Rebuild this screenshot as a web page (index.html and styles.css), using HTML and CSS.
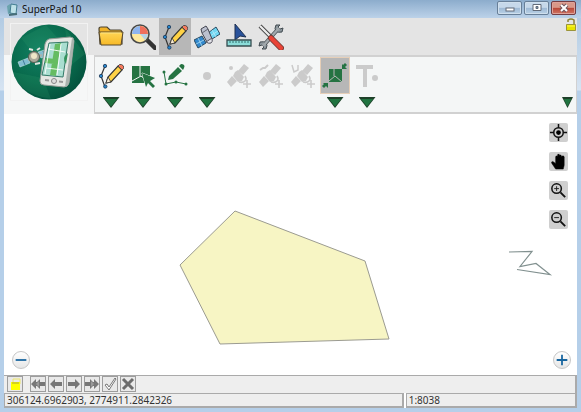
FILE: index.html
```html
<!DOCTYPE html>
<html lang="en">
<head>
<meta charset="utf-8">
<title>SuperPad 10</title>
<link rel="stylesheet" href="styles.css">
</head>
<body>
<svg class="defs" aria-hidden="true">
  <defs>
    <radialGradient id="disc" cx=".4" cy=".35" r=".7"><stop offset="0" stop-color="#128063"/><stop offset=".6" stop-color="#086a4c"/><stop offset="1" stop-color="#04503c"/></radialGradient>
    <linearGradient id="gold" x2="0" y2="1"><stop offset="0" stop-color="#ffd655"/><stop offset="1" stop-color="#f7b928"/></linearGradient>
    <symbol id="draw" viewBox="0 0 26 26">
      <path d="M7 3 3 13l4 11" fill="none" stroke="#333" stroke-width="1.2"/>
      <g fill="#2586cc" stroke="#1d3553" stroke-width=".8"><circle cx="7" cy="3" r="1.7"/><circle cx="3" cy="13" r="1.7"/><circle cx="7.300" cy="23.500" r="1.700"/></g>
      <path d="m8 20 2-6L20 3l4 4-11 12z" fill="#ffd245" stroke="#343434" stroke-width="1.200"/>
      <path d="m20 3 1.500-1.500q2-.5 3.500 1t.5 3L24 7z" fill="#f4795c" stroke="#444" stroke-width=".9"/>
      <path d="m10 14 3 5-5 1z" fill="#f8ead2" stroke="#333" stroke-width=".8"/>
    </symbol>
    <symbol id="gps" viewBox="0 0 26 26">
      <g fill="#cbcbcb"><path d="m18 1 5 4-6 7-5-4zM6 13l5 5-6 6-4-5z"/><path d="m9 9 3-2 6 7-2 4-4 1-5-6z"/></g>
      <path d="M13 19q4 1 6-1t0-5M21 17v8M17 21h8" fill="none" stroke="#cbcbcb" stroke-width="1.600"/>
    </symbol>
  </defs>
</svg>
<div class="window">
  <header class="titlebar">
    <svg class="app-icon" viewBox="0 0 13 13" aria-hidden="true"><path d="M1 3 4 1l2 9-4 1z" fill="#6ba3ad"/><path d="m5 1 6 1-1 9-6-1z" fill="#bee1e8" stroke="#427d91"/><path d="m3 12 8-1" stroke="#476d77" stroke-width="2"/></svg>
    <h1>SuperPad 10</h1>
    <div class="window-buttons">
      <button aria-label="Minimize"><svg viewBox="0 0 22 12"><rect x="7" y="6" width="8" height="3" fill="#fff" stroke="#626b79"/></svg></button>
      <button aria-label="Maximize"><svg viewBox="0 0 22 12"><path d="M7 2.500h8v6H7z" fill="#fff" stroke="#626b79"/><path d="M10 4.500h2v2h-2z" fill="#7796b6" stroke="#626b79"/></svg></button>
      <button class="close" aria-label="Close"><svg viewBox="0 0 22 12"><path d="m8 3 6 6m0-6L8 9" stroke="#70545b" stroke-width="4"/><path d="m8 3 6 6m0-6L8 9" stroke="#fff" stroke-width="2"/></svg></button>
    </div>
  </header>
  <main class="client">
    <section class="ribbon">
      <button class="logo" aria-label="SuperPad menu">
        <svg viewBox="0 0 76 76"><circle cx="38" cy="38" r="37.500" fill="url(#disc)"/>
          <path d="M10 14 35 1l16 18L32 42zM54 4l20 26-15 12zM2 48l30 6 8 21Q8 70 2 48z" fill="#31a06e" opacity=".2"/>
          <path d="m7 38 10-4 2 5-10 4zM27 28l10-3 1 6-8 3z" fill="#82bdd0" stroke="#c5e0e4" stroke-width=".6"/>
          <path d="m12 36 2 5m18-14 2 6" stroke="#417b98" stroke-width="1"/>
          <path d="m17 36 14-5" stroke="#abb3ad" stroke-width="2"/><circle cx="23" cy="33" r="5.500" fill="#aaa99b" stroke="#575e53"/><circle cx="23" cy="32" r="3" fill="#eee6c8"/><path d="m18 25 4 1m2 14 5-1m-3-13 3-2" stroke="#dfe6df" stroke-width="2"/>
          <path d="m38 15 21-2q4 0 4 4l-5 42q-1 4-5 4l-20-2q-4 0-4-4l5-37q1-4 4-5z" fill="#e5e7e3" stroke="#919b95"/>
          <path d="m61 14 2 3-5 42q-1 3-4 4z" fill="#aab3ae"/>
          <path d="m38 19 19-1-5 35-21-2z" fill="#a9ded0" stroke="#357a69"/>
          <path d="m44 20 6-1-5 33-6-1zM35 34l9 1-1 5-9-1z" fill="#65bc61"/><path d="m37 25 17 3M35 44l17 2M50 20l-4 31M39 20l-5 30" stroke="#fff" stroke-width=".9"/><path d="M57 29q-7 5-2 11z" fill="#33925c"/>
          <circle cx="43" cy="57" r="2.500" fill="#ddd" stroke="#888"/><path d="m34 56 4 .5m10 1 4 .5" stroke="#999" stroke-width="2"/>
        </svg>
      </button>
      <div class="tools">
        <nav class="tabs" aria-label="Tool groups">
          <button aria-label="Files"><svg viewBox="0 0 26 26"><path d="M1 5q0-2 2-2h6l3 3h10q2 0 2 3v11H2z" fill="#efb127" stroke="#4a4331" stroke-width="1.200"/><path d="M1 8h24l-2 13H3z" fill="url(#gold)" stroke="#57482d"/><path d="M3 9h20" stroke="#ffe482"/></svg></button>
          <button aria-label="Browse"><svg viewBox="0 0 26 26"><path d="m17 16 8 8" stroke="#333" stroke-width="4.500" stroke-linecap="round"/><circle cx="10" cy="10" r="9" fill="#ffe99d" stroke="#494949" stroke-width="1.600"/><path d="M10 10V2a8 8 0 0 1 8 8z" fill="#ef6f5c"/><path d="M10 10H2a8 8 0 0 1 8-8z" fill="#8fb5ef"/><path d="M18 10a8 8 0 0 1-3 6l-5-6z" fill="#b6d2e5"/></svg></button>
          <button class="selected" aria-label="Draw and capture" aria-pressed="true"><svg><use href="#draw"/></svg></button>
          <button aria-label="GPS"><svg viewBox="0 0 26 26"><path d="m14 9 8-6 4 7-8 5z" fill="#6fd6f2" stroke="#294a61"/><path d="m0 16 8-4 4 7-8 5z" fill="#3288cd" stroke="#294a61"/><path d="m4 14 4 8m-6-2 8-4M18 6l4 7m-6-1 8-5" stroke="#c2edf8" stroke-width=".7"/><path d="m7 5 5-3 2 3 4 10-5 3-5-9z" fill="#bbc0ce" stroke="#424450"/><path d="m8 9 6-4" stroke="#626673"/><path d="m12 18 6-4q1 4-1 5t-5-1z" fill="#e3e3e9" stroke="#585864"/></svg></button>
          <button aria-label="Measure"><svg viewBox="0 0 26 26"><path d="M9 0 20 13l-6-1-5 4z" fill="#29529b" stroke="#1e3151"/><path d="M1 16h24v6H1z" fill="#8bdcd9" stroke="#374d50" stroke-width="1.300"/><path d="M4 17v2m3-2v2m3-2v2m3-2v2m3-2v2m3-2v2m3-2v2" stroke="#31706e"/></svg></button>
          <button aria-label="Settings"><svg viewBox="0 0 26 26"><path d="m21 4-16 18" stroke="#4a5156" stroke-width="4"/><path d="M18 1q-2 4 0 6t6 1l1-4-3 1-2-2 2-2zM8 25q2-4 0-6t-6-1l-1 4 3-1 2 2-2 2z" fill="#8e989e" stroke="#414a50"/><path d="m21 4-16 18" stroke="#a1a8ac" stroke-width="2.500"/><path d="m2 2 12 12" stroke="#444" stroke-width="4"/><path d="m2 2 12 12" stroke="#eee" stroke-width="2.200"/><path d="m13 14 10 10" stroke="#743d37" stroke-width="6" stroke-linecap="round"/><path d="m13 14 10 10" stroke="#e84336" stroke-width="4.200" stroke-linecap="round"/></svg></button>
          <button class="lock" aria-label="Unlock toolbar"><svg viewBox="0 0 10 13"><path d="M2 4V2q3-2 6 0v5" fill="none" stroke="#8c8333" stroke-width="1.500"/><path d="M.5 6.500h9v6h-9z" fill="#e8e400" stroke="#9b943b"/><path d="M1 8h8" stroke="#fff94a"/></svg></button>
        </nav>
        <div class="actions">
          <div class="action"><button aria-label="Draw"><svg><use href="#draw"/></svg></button><button class="drop" aria-label="Draw options"></button></div>
          <div class="action"><button aria-label="Select feature"><svg viewBox="0 0 26 26"><path d="M2 3h18v17H2z" fill="#257342"/><path d="M10 3v10M2 18l9-5 9 7" fill="none" stroke="#f4f6f6"/><path d="m12 10 13 5-5 3 5 5-2 2-5-5-2 4z" fill="#257342" stroke="#f4f6f6"/><path d="M12 20h6v4h-6z" fill="#f4f6f6"/><path d="m12 10 13 5-5 3 5 5-2 2-5-5-2 4z" fill="#257342"/></svg></button><button class="drop" aria-label="Selection options"></button></div>
          <div class="action"><button aria-label="Edit vertices"><svg viewBox="0 0 26 26"><path d="M2 9l2 12 10-2 10 2" fill="none" stroke="#257342"/><path d="m7 13 9-9 4 4-9 8-5 1zM17 3l2-2q2 0 3 1t0 3l-1 2z" fill="#257342"/><g fill="#257342"><circle cx="2" cy="9" r="1.500"/><circle cx="4" cy="21" r="1.500"/><circle cx="14" cy="19" r="1.500"/><circle cx="24" cy="21" r="1.500"/></g></svg></button><button class="drop" aria-label="Vertex options"></button></div>
          <div class="action"><button aria-label="Point" disabled><svg viewBox="0 0 26 26"><circle cx="13" cy="13" r="4" fill="#cbcbcb"/></svg></button><button class="drop" aria-label="Point options"></button></div>
          <div class="action"><button aria-label="GPS point" disabled><svg viewBox="0 0 26 26"><use href="#gps"/><circle cx="5" cy="5" r="2" fill="#cbcbcb"/></svg></button></div>
          <div class="action"><button aria-label="GPS vertex" disabled><svg viewBox="0 0 26 26"><use href="#gps"/><path d="m2 7 3-2 2 0 3-3" fill="none" stroke="#cbcbcb" stroke-width="2"/></svg></button></div>
          <div class="action"><button aria-label="GPS track" disabled><svg viewBox="0 0 26 26"><use href="#gps"/><path d="m2 2 2 7 4-2V2" fill="none" stroke="#cbcbcb" stroke-width="1.500"/></svg></button></div>
          <div class="action"><button class="selected framed" aria-label="Snap" aria-pressed="true"><svg viewBox="0 0 26 26"><path d="M7 6h13v13H7z" fill="#257342"/><path d="M12 6v7M7 18l6-5 7 6" fill="none" stroke="#b7b7b7"/><path d="M20 1v5h5l-2-2 2-2-2-2-2 2zM1 20h5v5l-2-2-2 2-2-2 2-2z" fill="#257342"/></svg></button><button class="drop" aria-label="Snap options"></button></div>
          <div class="action"><button aria-label="Text label" disabled><svg viewBox="0 0 26 26"><path d="M2 2h17v4h-6v18H9V6H2z" fill="#cbcbcb"/><circle cx="21" cy="15" r="3" fill="#cbcbcb"/></svg></button><button class="drop" aria-label="Text options"></button></div>
          <button class="drop more" aria-label="More tools"></button>
        </div>
      </div>
    </section>
    <section class="map" aria-label="Map">
      <svg class="features" viewBox="0 0 573 262" aria-hidden="true"><path d="m231 97 130 50 24 78-169 5-40-79z" fill="#f7f5c4" stroke="#9b9b91"/><path d="m505 138 23-.5-12 15 16-3 14 11-33-5" fill="none" stroke="#81908f" stroke-width="1.200"/></svg>
      <div class="map-tools">
        <button aria-label="My location"><svg viewBox="0 0 20 20"><circle cx="10" cy="10" r="5" fill="none" stroke="#111" stroke-width="1.600"/><circle cx="10" cy="10" r="2.500"/><path d="M10 1v4m0 10v4M1 10h4m10 0h4" stroke="#111" stroke-width="1.600"/></svg></button>
        <button aria-label="Pan"><svg viewBox="0 0 20 20"><path d="M7 18 3 12q-1-2 1-2l3 2V5q1-2 2 0v4-6q1-2 2 0v6-5q1-2 2 0v5-4q2-2 3 0v9l-1 4z" stroke="#000" stroke-width=".5"/></svg></button>
        <button aria-label="Zoom in"><svg viewBox="0 0 20 20"><circle cx="8" cy="8" r="5" fill="none" stroke="#111" stroke-width="1.600"/><path d="M5.500 8h5M8 5.500v5" stroke="#222"/><path d="m12 12 5 5" stroke="#111" stroke-width="2"/></svg></button>
        <button aria-label="Zoom out"><svg viewBox="0 0 20 20"><circle cx="8" cy="8" r="5" fill="none" stroke="#111" stroke-width="1.600"/><path d="M5.500 8h5" stroke="#222"/><path d="m12 12 5 5" stroke="#111" stroke-width="2"/></svg></button>
      </div>
      <div class="zoom-row">
        <button aria-label="Decrease scale"><svg viewBox="0 0 18 18"><path d="M3 9h12" stroke="#17659f" stroke-width="2"/></svg></button>
        <button aria-label="Increase scale"><svg viewBox="0 0 18 18"><path d="M3 9h12M9 3v12" stroke="#17659f" stroke-width="2"/></svg></button>
      </div>
    </section>
    <div class="editbar">
      <button class="edit-lock" aria-label="Toggle lock"><svg viewBox="0 0 14 14"><path d="M5 5V2h7v5" fill="none" stroke="#eee66b"/><path d="M3 5h9v8H3z" fill="#ff0"/><path d="M4 6h7" stroke="#aaa53d"/></svg></button>
      <button aria-label="Undo all"><svg viewBox="0 0 14 14"><path d="m0 7 5-5v3h1l3-3v3h5v4H9v3L6 9H5v3z" fill="#777"/><path d="m5 7 3-3v6z" fill="#999"/></svg></button>
      <button aria-label="Undo"><svg viewBox="0 0 14 14"><path d="m1 7 5-5v3h7v4H6v3z" fill="#777"/></svg></button>
      <button aria-label="Redo"><svg viewBox="0 0 14 14"><path d="M13 7 8 2v3H1v4h7v3z" fill="#777"/></svg></button>
      <button aria-label="Redo all"><svg viewBox="0 0 14 14"><path d="M14 7 9 2v3H8L5 2v3H0v4h5v3l3-3h1v3z" fill="#777"/><path d="M9 7 6 4v6z" fill="#999"/></svg></button>
      <button aria-label="Accept"><svg viewBox="0 0 14 14"><path d="m2 8 2-1 2 3 6-9 1 1-7 11z" fill="#fff" stroke="#777"/></svg></button>
      <button aria-label="Discard"><svg viewBox="0 0 14 14"><path d="m2 2 10 10m0-10L2 12" stroke="#6c6c6c" stroke-width="3"/></svg></button>
    </div>
    <footer class="status"><span>306124.6962903, 2774911.2842326</span><span>1:8038</span></footer>
  </main>
</div>
</body>
</html>
```
FILE: styles.css
```css
* {
  box-sizing: border-box;
}

body {
  margin: 0;
  font: 10px/12px "Noto Sans", sans-serif;
  color: #222;
}

button {
  display: grid;
  place-items: center;
  margin: 0;
  padding: 0;
  border: 0;
  background: none;
}

svg {
  display: block;
}

.defs {
  position: absolute;
  width: 0;
  height: 0;
}

.window {
  display: flex;
  flex-direction: column;
  min-height: 100vh;
  padding: 0 4px 4px;
  background: linear-gradient(#a9c5df, #d6e4f2 90px, #b5cfe9 91px);
}

.titlebar {
  display: flex;
  align-items: center;
  height: 18px;
  margin: 0 -4px;
  padding-left: 6px;
  background: linear-gradient(#8caccc, #bcd2e9);
}

.app-icon {
  width: 13px;
  height: 13px;
}

h1 {
  margin: 0 0 0 3px;
  font-size: 10px;
  font-weight: 400;
  color: #111;
}

.window-buttons {
  display: flex;
  align-self: flex-start;
  gap: 2px;
  margin-left: auto;
  padding: 1px 5px 0 0;
}

.window-buttons button {
  width: 25px;
  height: 14px;
  border: 1px solid #687f98;
  border-radius: 2px;
  background: linear-gradient(#c6d8ea 45%, #9eb9d5 50%, #b9d1e6);
  box-shadow: inset 0 0 0 1px #cfdfed;
}

.window-buttons .close {
  border-color: #733d43;
  background: linear-gradient(#d99889 45%, #b94636 50%, #cf7665);
  box-shadow: inset 0 0 0 1px #dea299;
}

.window-buttons svg {
  width: 22px;
  height: 12px;
}

.client {
  flex: 1;
  display: flex;
  flex-direction: column;
  background: #fff;
}

.ribbon {
  display: flex;
  background: linear-gradient(#e4e4e4 37px, #f6f7f7 37px);
}

.logo {
  width: 90px;
  padding-bottom: 8px;
}

.logo svg {
  width: 78px;
  height: 78px;
  border: 1px solid #f2f2f2;
}

.tools {
  flex: 1;
}

.tabs {
  display: flex;
  height: 37px;
  padding-left: 1px;
}

.tabs button {
  width: 32px;
}

.tabs svg,
.action svg {
  width: 26px;
  height: 26px;
}

.tabs .selected,
.action .selected {
  background: #b7b7b7;
}

.tabs .lock {
  align-self: flex-start;
  width: 10px;
  margin-left: auto;
  margin-right: 1px;
}

.tabs .lock svg {
  width: 10px;
  height: 13px;
}

.actions {
  display: flex;
  height: 59px;
  border: 2px solid #d1d1d1;
  border-width: 2px 1px;
  background: #f4f6f6;
}

.action {
  display: flex;
  flex-direction: column;
  align-items: center;
  gap: 3px;
  width: 32px;
}

.action button:first-child {
  width: 30px;
  height: 37px;
}

.action .framed {
  border: 1px solid #e6cfb8;
}

.drop,
.action .drop {
  width: 17px;
  height: 11px;
  background: #1e4029;
  clip-path: polygon(0 0, 100% 0, 50% 100%);
}

.drop::before {
  content: "";
  width: 13px;
  height: 8px;
  background: #207340;
  clip-path: polygon(0 0, 100% 0, 50% 100%);
}

.actions .more {
  align-self: flex-end;
  width: 11px;
  margin: 0 3px 4px auto;
}

.more::before {
  width: 8px;
}

.map {
  flex: 1;
  position: relative;
  display: flex;
  flex-direction: column;
  justify-content: space-between;
}

.features {
  position: absolute;
  width: 100%;
}

.map-tools {
  position: relative;
  display: grid;
  gap: 10px;
  align-self: flex-end;
  padding: 9px 9px 0 0;
}

.map-tools button {
  width: 19px;
  height: 19px;
  border-radius: 2px;
  background: #cfcfcf;
}

.map-tools svg {
  width: 19px;
  height: 19px;
}

.zoom-row {
  position: relative;
  display: flex;
  justify-content: space-between;
  padding: 0 6px 6px 8px;
}

.zoom-row button {
  width: 18px;
  height: 18px;
  border: 1px solid #c6c6c6;
  border-radius: 50%;
  background: linear-gradient(#fff, #e6e6e6);
}

.zoom-row svg {
  width: 16px;
  height: 16px;
}

.editbar {
  display: flex;
  gap: 2px;
  height: 18px;
  padding: 0 3px;
  border-top: 1px solid #aaa;
  border-right: 2px solid #aaa;
  background: #eee;
}

.editbar button {
  width: 16px;
  height: 16px;
  border: 1px solid #9d9d9d;
  background: #e9e9e9;
}

.editbar svg {
  width: 14px;
  height: 14px;
}

.editbar .edit-lock {
  margin-right: 5px;
}

.status {
  display: grid;
  grid-template-columns: 7fr 3fr;
  gap: 2px;
  color: #333;
}

.status span {
  height: 15px;
  padding: 0 2px;
  border: 1px solid #aaa;
  border-right-width: 2px;
  border-bottom-width: 2px;
  background: #eee;
}
```
